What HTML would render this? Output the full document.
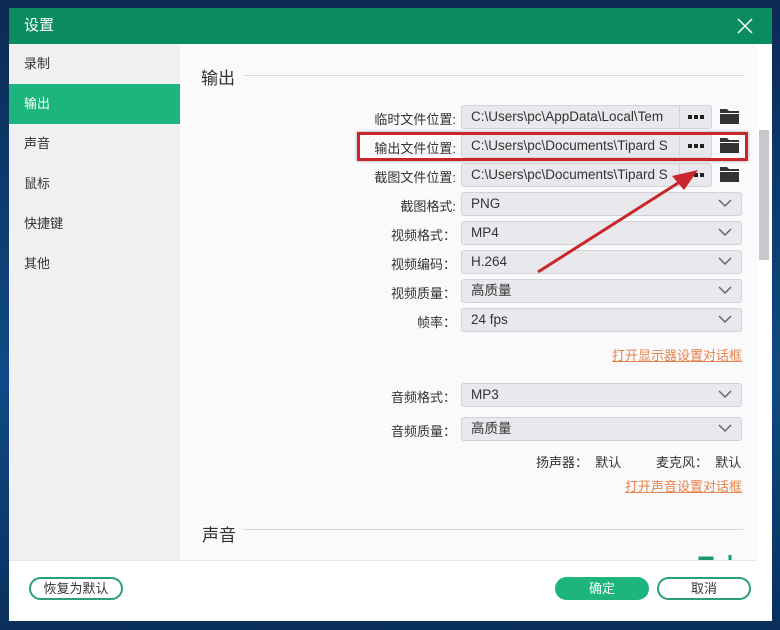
<!DOCTYPE html>
<html><head><meta charset="utf-8"><style>
*{margin:0;padding:0;box-sizing:border-box}
body{width:780px;height:630px;overflow:hidden;font-family:"Liberation Sans","Noto Sans CJK SC",sans-serif;background:linear-gradient(180deg,#0b2a52 0%,#0f4a86 60%,#0a2f5c 100%);position:relative;font-size:13px;color:#333}
.win{position:absolute;left:9px;top:8px;width:763px;height:613px;background:#faf9fb}
.title{position:absolute;left:0;top:0;width:763px;height:36px;background:#0b8c5e;color:#fff;font-size:15px;line-height:36px;padding-left:15px}
.close{position:absolute;right:18px;top:9px;width:18px;height:18px}
.side{position:absolute;left:0;top:36px;width:171px;height:516px;background:#f0eff1}
.side div{height:40px;line-height:40px;padding-left:15px;font-size:13px;color:#333}
.side .on{background:#1db47e;color:#fff}
.a{position:absolute}
.h{font-size:17px;color:#333}
.line{position:absolute;height:1px;background:#d8d8dc}
.lbl{position:absolute;width:200px;text-align:right;font-size:13px;color:#333}
.box{position:absolute;height:24px;background:#e9e8ec;border:1px solid #d3d2d6;border-radius:3px;font-size:13.5px;line-height:22px;padding-left:9px;color:#333;white-space:nowrap;overflow:hidden}
.dots{position:absolute;height:24px;width:33px;background:#e9e8ec;border:1px solid #d3d2d6;border-radius:0 3px 3px 0}
.dots i{position:absolute;top:9px;width:4px;height:4px;background:#222}
.chev{position:absolute;right:9px;top:5px}
.link{position:absolute;color:#e8844a;text-decoration:underline;font-size:13px}
.btn{position:absolute;height:23px;border-radius:12px;border:2px solid #2aa07a;text-align:center;line-height:19px;font-size:13px;background:#fff}
.sb{position:absolute;left:748px;top:36px;width:15px;height:577px;background:#fff}
</style></head><body>
<div class="win">
<div class="title">设置
<svg class="close" viewBox="0 0 18 18"><path d="M2 2L16 16M16 2L2 16" stroke="#fff" stroke-width="1.5"/></svg></div>
<div class="side"><div>录制</div><div class="on">输出</div><div>声音</div><div>鼠标</div><div>快捷键</div><div>其他</div></div>
<div class="sb"><div style="position:absolute;left:2px;top:86px;width:10px;height:130px;background:#c8c8cc"></div></div>
<div class="a h" style="left:192px;top:56px">输出</div>
<div class="line" style="left:235px;top:67px;width:500px"></div>
</div>
<div id="c"></div>
<script>
var rows=[["临时文件位置:","C:\\Users\\pc\\AppData\\Local\\Tem",1],["输出文件位置:","C:\\Users\\pc\\Documents\\Tipard S",1],["截图文件位置:","C:\\Users\\pc\\Documents\\Tipard S",1],["截图格式:","PNG",0],["视频格式：","MP4",0],["视频编码：","H.264",0],["视频质量：","高质量",0],["帧率：","24 fps",0]];
var h="";
var chev='<svg class="chev" width="14" height="10" viewBox="0 0 14 10"><path d="M1 2L7 8L13 2" fill="none" stroke="#666" stroke-width="1.5"/></svg>';
var folder='<svg width="19" height="16" viewBox="0 0 19 16"><path d="M0 1H7L9 3H19V16H0Z" fill="#333"/><rect x="0" y="5" width="19" height="1" fill="#fff"/></svg>';
rows.forEach(function(r,i){var y=105+i*29;
h+='<div class="lbl" style="left:256px;top:'+(y+4)+'px">'+r[0]+'</div>';
if(r[2]){h+='<div class="box" style="left:461px;top:'+y+'px;width:219px;border-radius:3px 0 0 3px">'+r[1]+'</div><div class="dots" style="left:679px;top:'+y+'px"><i style="left:8px"></i><i style="left:14px"></i><i style="left:20px"></i></div><div class="a" style="left:720px;top:'+(y+3)+'px">'+folder+'</div>';}
else h+='<div class="box" style="left:461px;top:'+y+'px;width:281px">'+r[1]+chev+'</div>';});
h+='<div class="link" style="left:612px;top:345px">打开显示器设置对话框</div>';
h+='<div class="lbl" style="left:256px;top:387px">音频格式：</div><div class="box" style="left:461px;top:383px;width:281px">MP3'+chev+'</div>';
h+='<div class="lbl" style="left:256px;top:421px">音频质量：</div><div class="box" style="left:461px;top:417px;width:281px">高质量'+chev+'</div>';
h+='<div class="a" style="left:536px;top:452px">扬声器：&nbsp; 默认</div><div class="a" style="left:656px;top:452px">麦克风：&nbsp; 默认</div>';
h+='<div class="link" style="left:625px;top:476px">打开声音设置对话框</div>';
h+='<div class="a h" style="left:202px;top:521px">声音</div><div class="line" style="left:243px;top:529px;width:500px"></div>';
h+='<div class="a" style="left:357px;top:132px;width:391px;height:29px;border:3px solid #c8262a;box-shadow:0 0 3px rgba(0,0,0,.35)"></div>';
h+='<svg class="a" style="left:0;top:0" width="780" height="630"><path d="M538 272L686 178" stroke="#c8262a" stroke-width="3"/><path d="M698 170L672 176L684 190Z" fill="#c8262a"/><path d="M700 558h12v3h-12zM730 555v6" stroke="#1a9a6a" stroke-width="3" fill="none"/></svg>';
h+='<div class="a" style="left:9px;top:560px;width:748px;height:61px;background:#fff;border-top:1px solid #e6e6e6"></div>';
h+='<div class="btn" style="left:29px;top:577px;width:94px">恢复为默认</div>';
h+='<div class="btn" style="left:555px;top:577px;width:94px;background:#1db47e;border-color:#1db47e;color:#fff">确定</div>';
h+='<div class="btn" style="left:657px;top:577px;width:94px">取消</div>';
document.getElementById("c").innerHTML=h;
</script>
</body></html>
